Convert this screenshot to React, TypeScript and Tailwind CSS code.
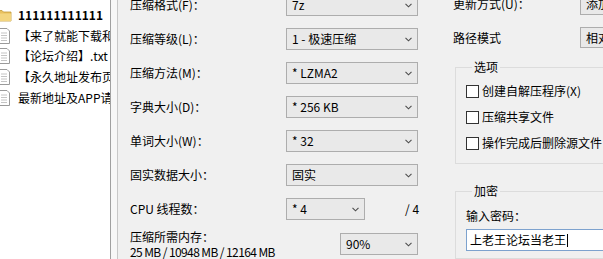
import React from "react";

const FONT = { fontFamily: '"Noto Sans CJK SC", "Liberation Sans", sans-serif' };

function Chevron() {
  return (
    <svg width="7" height="5" viewBox="0 0 7 5" className="shrink-0">
      <path d="M0.5 0.8 L3.5 3.8 L6.5 0.8" stroke="#4d4d4d" strokeWidth="1.1" fill="none" />
    </svg>
  );
}

function Select({ text, className }: { text: React.ReactNode; className: string }) {
  return (
    <div className={`flex items-center justify-between border border-[#adadad] bg-[#e9e9e9] pl-[5px] pr-[5px] ${className}`}>
      <span className="whitespace-nowrap leading-none">{text}</span>
      <Chevron />
    </div>
  );
}

function FolderIcon() {
  return (
    <svg width="16" height="16" viewBox="0 0 16 16" className="shrink-0 -ml-[4px]">
      <path d="M1 3.5 H6 L7.5 5 H15 V14 H1 Z" fill="#e9c15f" stroke="#c29a3a" strokeWidth="0.8" />
      <path d="M1 6.5 H15 V14 H1 Z" fill="#f3d57f" />
    </svg>
  );
}

function DocIcon() {
  return (
    <svg width="16" height="16" viewBox="0 0 16 16" className="shrink-0 -ml-[4px]">
      <path d="M2.5 0.5 H11 L13.5 3 V15.5 H2.5 Z" fill="#ffffff" stroke="#9a9a9a" strokeWidth="1" />
      <path d="M5 5 H11 M5 7.5 H11 M5 10 H11 M5 12.5 H11" stroke="#c4c4c4" strokeWidth="1" />
    </svg>
  );
}

function FileRow({ icon, name, bold, indent }: { icon: "folder" | "doc"; name: string; bold?: boolean; indent: string }) {
  return (
    <div className="flex h-[20.75px] items-center">
      {icon === "folder" ? <FolderIcon /> : <DocIcon />}
      <span className={`whitespace-nowrap text-[12px] text-black ${indent} ${bold ? "font-bold" : ""}`}>{name}</span>
    </div>
  );
}

function Checkbox({ label }: { label: string }) {
  return (
    <div className="flex h-[26px] items-center">
      <div className="h-[13px] w-[13px] shrink-0 border border-[#333333] bg-white" />
      <span className="ml-[3px] whitespace-nowrap">{label}</span>
    </div>
  );
}

export default function App() {
  return (
    <div className="flex h-[259px] w-[603px] overflow-hidden bg-[#f0f0f0] text-[12px] text-black" style={FONT}>
      {/* file list */}
      <div className="flex h-full w-[111px] shrink-0 flex-col overflow-hidden border-r border-[#a0a0a0] bg-white pt-[4.5px]">
        <FileRow icon="folder" name="111111111111" bold indent="ml-[6px]" />
        <FileRow icon="doc" name="【来了就能下载和谐" indent="ml-[6px]" />
        <FileRow icon="doc" name="【论坛介绍】.txt" indent="ml-[6px]" />
        <FileRow icon="doc" name="【永久地址发布页" indent="ml-[6px]" />
        <FileRow icon="doc" name="最新地址及APP请" indent="ml-[6px]" />
      </div>
      <div className="h-full w-[7px] shrink-0 border-r border-[#c8c8c8] bg-[#f7f7f7]" />

      {/* middle column */}
      <div className="flex w-[322px] shrink-0 flex-col gap-[12px] pl-[12px] -mt-[6px]">
        <div className="flex h-[22px] items-center">
          <span className="w-[156px] shrink-0">压缩格式(F)：</span>
          <Select text="7z" className="h-[22px] w-[132px]" />
        </div>
        <div className="flex h-[22px] items-center">
          <span className="w-[156px] shrink-0">压缩等级(L)：</span>
          <Select text="1 - 极速压缩" className="h-[22px] w-[132px]" />
        </div>
        <div className="flex h-[22px] items-center">
          <span className="w-[156px] shrink-0">压缩方法(M)：</span>
          <Select text="* LZMA2" className="h-[22px] w-[132px]" />
        </div>
        <div className="flex h-[22px] items-center">
          <span className="w-[156px] shrink-0">字典大小(D)：</span>
          <Select text="* 256 KB" className="h-[22px] w-[132px]" />
        </div>
        <div className="flex h-[22px] items-center">
          <span className="w-[156px] shrink-0">单词大小(W)：</span>
          <Select text="* 32" className="h-[22px] w-[132px]" />
        </div>
        <div className="flex h-[22px] items-center">
          <span className="w-[156px] shrink-0">固实数据大小：</span>
          <Select text="固实" className="h-[22px] w-[132px]" />
        </div>
        <div className="flex h-[22px] items-center">
          <span className="w-[156px] shrink-0">CPU 线程数：</span>
          <Select text="* 4" className="h-[22px] w-[79px]" />
          <span className="ml-[40px]">/ 4</span>
        </div>
        <div className="flex h-[22px] items-start">
          <div className="-mt-[3px] flex w-[210px] shrink-0 flex-col">
            <div className="h-[15px] leading-[15px]">压缩所需内存：</div>
            <div className="h-[15px] whitespace-nowrap leading-[15px] tracking-[-0.6px]">25 MB / 10948 MB / 12164 MB</div>
          </div>
          <Select text="90%" className="mt-[1px] h-[22px] w-[78px]" />
        </div>
      </div>

      {/* right column */}
      <div className="flex w-[200px] shrink-0 flex-col -mt-[7px]">
        <div className="flex h-[22px] items-center pl-[13px]">
          <span className="w-[127px] shrink-0">更新方式(U)：</span>
          <Select text="添加并替换文件" className="h-[22px] w-[140px]" />
        </div>
        <div className="mt-[12px] flex h-[21px] items-center pl-[13px]">
          <span className="w-[127px] shrink-0">路径模式</span>
          <Select text="相对路径" className="h-[21px] w-[140px]" />
        </div>
        <fieldset className="ml-[15px] mt-[11px] w-[200px] border border-[#dcdcdc] pb-[7px] pl-[10px] pt-[3px]">
          <legend className="ml-[6px] px-[2px] leading-[16px]">选项</legend>
          <Checkbox label="创建自解压程序(X)" />
          <Checkbox label="压缩共享文件" />
          <Checkbox label="操作完成后删除源文件" />
        </fieldset>
        <fieldset className="ml-[15px] mt-[19px] h-[120px] w-[200px] border border-[#dcdcdc] pl-[10px] pt-[9px]">
          <legend className="ml-[6px] px-[2px] leading-[16px]">加密</legend>
          <div className="leading-[16px]">输入密码：</div>
          <div className="mt-[5px] flex h-[22px] w-[180px] items-center border border-[#7da2ce] bg-white pl-[3px]">
            <span className="whitespace-nowrap">上老王论坛当老王</span>
            <span className="ml-[1px] h-[13px] w-[1px] bg-black" />
          </div>
        </fieldset>
      </div>
    </div>
  );
}
